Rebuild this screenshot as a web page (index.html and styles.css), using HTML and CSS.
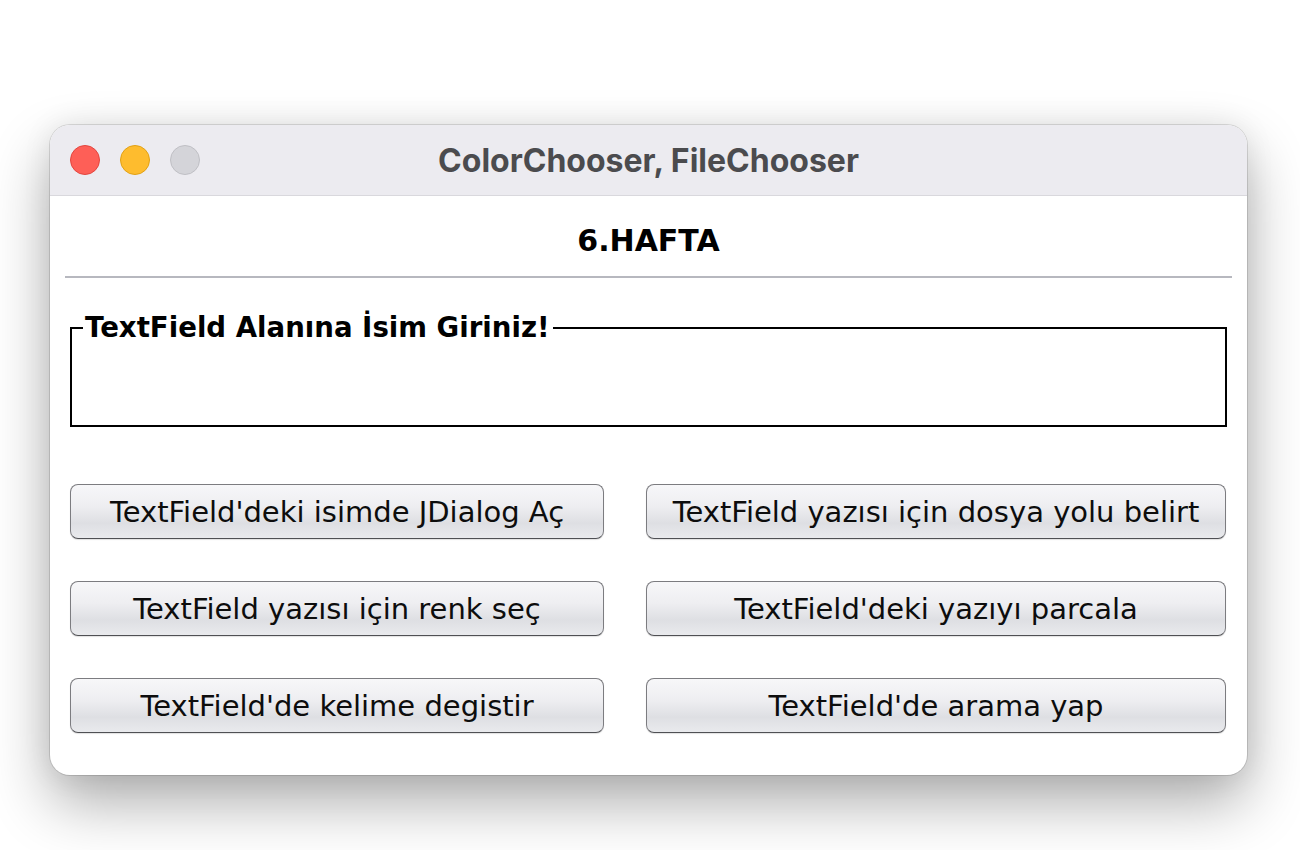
FILE: index.html
```html
<!DOCTYPE html>
<html lang="tr">
<head>
<meta charset="utf-8">
<title>ColorChooser, FileChooser</title>
<link rel="stylesheet" href="styles.css">
</head>
<body>
<div class="window">
  <div class="titlebar">
    <div class="lights">
      <span class="light red"></span>
      <span class="light yellow"></span>
      <span class="light grey"></span>
    </div>
    <div class="title">ColorChooser, FileChooser</div>
  </div>
  <div class="content">
    <div class="heading">6.HAFTA</div>
    <div class="sep"></div>
    <fieldset class="group">
      <legend>TextField Alanına İsim Giriniz!</legend>
    </fieldset>
    <div class="buttons">
      <button class="btn">TextField'deki isimde JDialog Aç</button>
      <button class="btn">TextField yazısı için dosya yolu belirt</button>
      <button class="btn">TextField yazısı için renk seç</button>
      <button class="btn">TextField'deki yazıyı parcala</button>
      <button class="btn">TextField'de kelime degistir</button>
      <button class="btn">TextField'de arama yap</button>
    </div>
  </div>
</div>
</body>
</html>
```
FILE: styles.css
```css
html, body {
  margin: 0;
  padding: 0;
  background: #ffffff;
  width: 1300px;
  height: 850px;
  overflow: hidden;
}
body {
  padding-top: 125px;
  padding-left: 50px;
  box-sizing: border-box;
  font-family: "DejaVu Sans", sans-serif;
}
.window {
  width: 1197px;
  height: 650px;
  border-radius: 20px;
  background: #ffffff;
  box-shadow: 0 0 0 1px rgba(0,0,0,0.12), 0 28px 60px rgba(0,0,0,0.32), 0 0 30px rgba(0,0,0,0.08);
  overflow: hidden;
  display: flex;
  flex-direction: column;
}
.titlebar {
  height: 70px;
  flex: none;
  background: #ecebf0;
  border-bottom: 1px solid #d9d8dd;
  position: relative;
  display: flex;
  align-items: center;
  justify-content: center;
}
.lights {
  position: absolute;
  left: 20px;
  top: 20px;
  display: flex;
  gap: 20px;
}
.light {
  width: 28px;
  height: 28px;
  border-radius: 50%;
  border: 1px solid transparent;
}
.red { background: #fe5f57; border-color: #e2463f; }
.yellow { background: #febc2e; border-color: #e1a116; }
.grey { background: #d4d4d9; border-color: #bfbfc4; }
.title {
  font-family: Inter, "Liberation Sans", sans-serif;
  font-weight: 700;
  font-size: 32px;
  color: #4b4b4e;
  letter-spacing: 0;
}
.content {
  padding: 0 15px;
}
.heading {
  height: 80px;
  display: flex;
  align-items: center;
  justify-content: center;
  font-weight: 700;
  font-size: 30px;
  color: #000;
  padding-top: 8px;
  box-sizing: border-box;
}
.sep {
  height: 2px;
  background: #b7b8bf;
}
.group {
  margin: 36px 5px 0 5px;
  height: 113px;
  box-sizing: border-box;
  border: 2px solid #000;
  padding: 0;
}
.group legend {
  font-weight: 700;
  font-size: 27.6px;
  color: #000;
  padding: 0 3px 0 2px;
  margin-left: 11px;
  line-height: 28px;
}
.buttons {
  margin: 57px 5px 0 5px;
  display: grid;
  grid-template-columns: 534px 580px;
  column-gap: 42px;
  row-gap: 42px;
}
.btn {
  height: 55px;
  font-family: "DejaVu Sans", sans-serif;
  font-size: 29px;
  color: #0d0d0d;
  border: 1px solid #7c7c80;
  border-bottom-color: #4f5054;
  border-radius: 8px;
  background: linear-gradient(#f7f7f9 0%, #eeeef1 40%, #dedfe3 72%, #e9eaed 100%);
  box-shadow: 0 1px 1px rgba(0,0,0,0.12);
  padding: 0;
}
```
